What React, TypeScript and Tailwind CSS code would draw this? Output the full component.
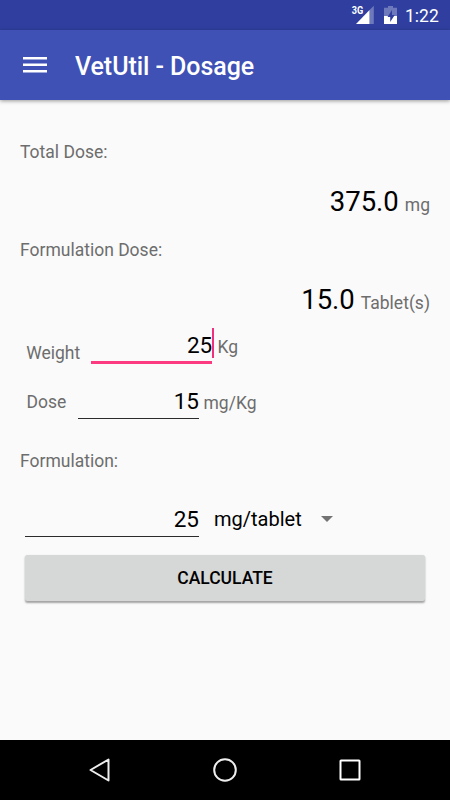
import clsx from "clsx";

const StatusBar = () => (
  <div className="flex h-[30px] items-start bg-[#303f9f] pl-[351px] text-white">
    <svg width="54" height="30" viewBox="0 0 54 30" fill="#fff">
      <text
        x="0.8"
        y="14"
        fontFamily="Roboto"
        fontSize="10"
        fontWeight="700"
        textLength="11.5"
        lengthAdjust="spacingAndGlyphs"
      >
        3G
      </text>
      <path d="M18.500 10v14H5z" />
      <path d="M18.500 10l4.300-4.300V24h-4.300z" fillOpacity="0.3" />
      <path d="M37 6h5v1.800h4V16H33V7.800h4z" fillOpacity="0.3" />
      <path d="M33 16h13v8H33z" />
      <path d="M41 10l-4.500 7h2.700v5l4.500-7h-2.700z" fill="#303f9f" />
    </svg>
    <span className="text-[17.500px] leading-8">1:22</span>
  </div>
);

const Toolbar = () => (
  <header className="relative flex h-[70px] items-center bg-[#3f51b5] pl-[23px] text-white shadow-[0_1px_4px_rgba(0,0,0,0.4)]">
    <svg width="24" height="18" viewBox="0 0 24 18" fill="#fff">
      <path d="M0 1h24v2.500H0zM0 7.500h24v2.500H0zM0 14h24v2.500H0z" />
    </svg>
    <h1 className="mt-1 ml-7 text-[25px] leading-8 font-medium tracking-[-0.060px]">
      VetUtil - Dosage
    </h1>
  </header>
);

const Label = ({ text, className }: { text: string; className?: string }) => (
  <span
    className={clsx(
      "block text-[17.500px] leading-5 whitespace-nowrap text-[#6d6d6d]",
      className,
    )}
  >
    {text}
  </span>
);

const Result = ({ value, unit }: { value: string; unit: string }) => (
  <div className="flex h-8 items-baseline justify-end gap-[6px]">
    <span className="text-[27.500px] leading-8">{value}</span>
    <Label text={unit} />
  </div>
);

const Field = ({
  value,
  focused,
  className,
}: {
  value: string;
  focused?: boolean;
  className: string;
}) => (
  <div
    className={clsx(
      "relative text-right text-[22.500px] leading-7",
      focused ? "border-b-3 border-[#fb3a80]" : "border-b border-[#2b2b2b]",
      className,
    )}
  >
    {value}
    {focused && (
      <span className="absolute -top-[3px] -right-[2px] h-[30px] w-[2px] bg-[#f0307c]" />
    )}
  </div>
);

const NavigationBar = () => (
  <nav className="flex h-[60px] items-center justify-center gap-[101px] bg-black">
    <svg width="24" height="28" viewBox="0 0 24 28" fill="none" stroke="#eee" strokeWidth="2" strokeLinejoin="round">
      <path d="M20.500 3.500v21L2.500 14z" />
    </svg>
    <svg width="24" height="24" viewBox="0 0 24 24" fill="none" stroke="#eee" strokeWidth="2">
      <circle cx="12" cy="12" r="10.800" />
    </svg>
    <svg width="24" height="24" viewBox="0 0 24 24" fill="none" stroke="#fff" strokeWidth="2">
      <rect x="2.500" y="2.500" width="19" height="19" rx="0.500" />
    </svg>
  </nav>
);

export default function App() {
  return (
    <div className="flex h-[800px] w-[450px] flex-col overflow-hidden bg-[#fafafa] font-[Roboto,sans-serif] text-black">
      <StatusBar />
      <Toolbar />
      <main className="flex-1 px-5 pt-[42px]">
        <Label text="Total Dose:" />
        <div className="mt-6">
          <Result value="375.0" unit="mg" />
        </div>
        <Label text="Formulation Dose:" className="mt-[22px]" />
        <div className="mt-6">
          <Result value="15.0" unit="Tablet(s)" />
        </div>
        <div className="mt-[15px] flex h-[33px] items-start pl-[6.250px]">
          <Label text="Weight" className="w-[65px] pt-3" />
          <Field value="25" focused className="h-[33px] w-[121px]" />
          <Label text="Kg" className="ml-[5.250px] pt-[6px]" />
        </div>
        <div className="mt-[23px] flex h-8 items-start pl-[6.500px]">
          <Label text="Dose" className="w-[51.500px] pt-[5px]" />
          <Field value="15" className="h-8 w-[121px]" />
          <Label text="mg/Kg" className="ml-[4.500px] pt-[6px]" />
        </div>
        <Label text="Formulation:" className="mt-8" />
        <div className="mt-[34px] flex h-8 items-start pl-[5px]">
          <Field value="25" className="h-8 w-[174px]" />
          <span className="ml-[15px] w-[107px] text-[20px] leading-7">mg/tablet</span>
          <svg className="mt-[11px]" width="12" height="6" viewBox="0 0 12 6" fill="#737373">
            <path d="M0 0h12L6 6z" />
          </svg>
        </div>
        <button className="mt-[18px] ml-[5px] block h-[46px] w-[400px] rounded-[2.500px] bg-[#d6d7d7] text-[17.500px] font-medium shadow-[0_1.500px_2px_rgba(0,0,0,0.35)]">
          CALCULATE
        </button>
      </main>
      <NavigationBar />
    </div>
  );
}
